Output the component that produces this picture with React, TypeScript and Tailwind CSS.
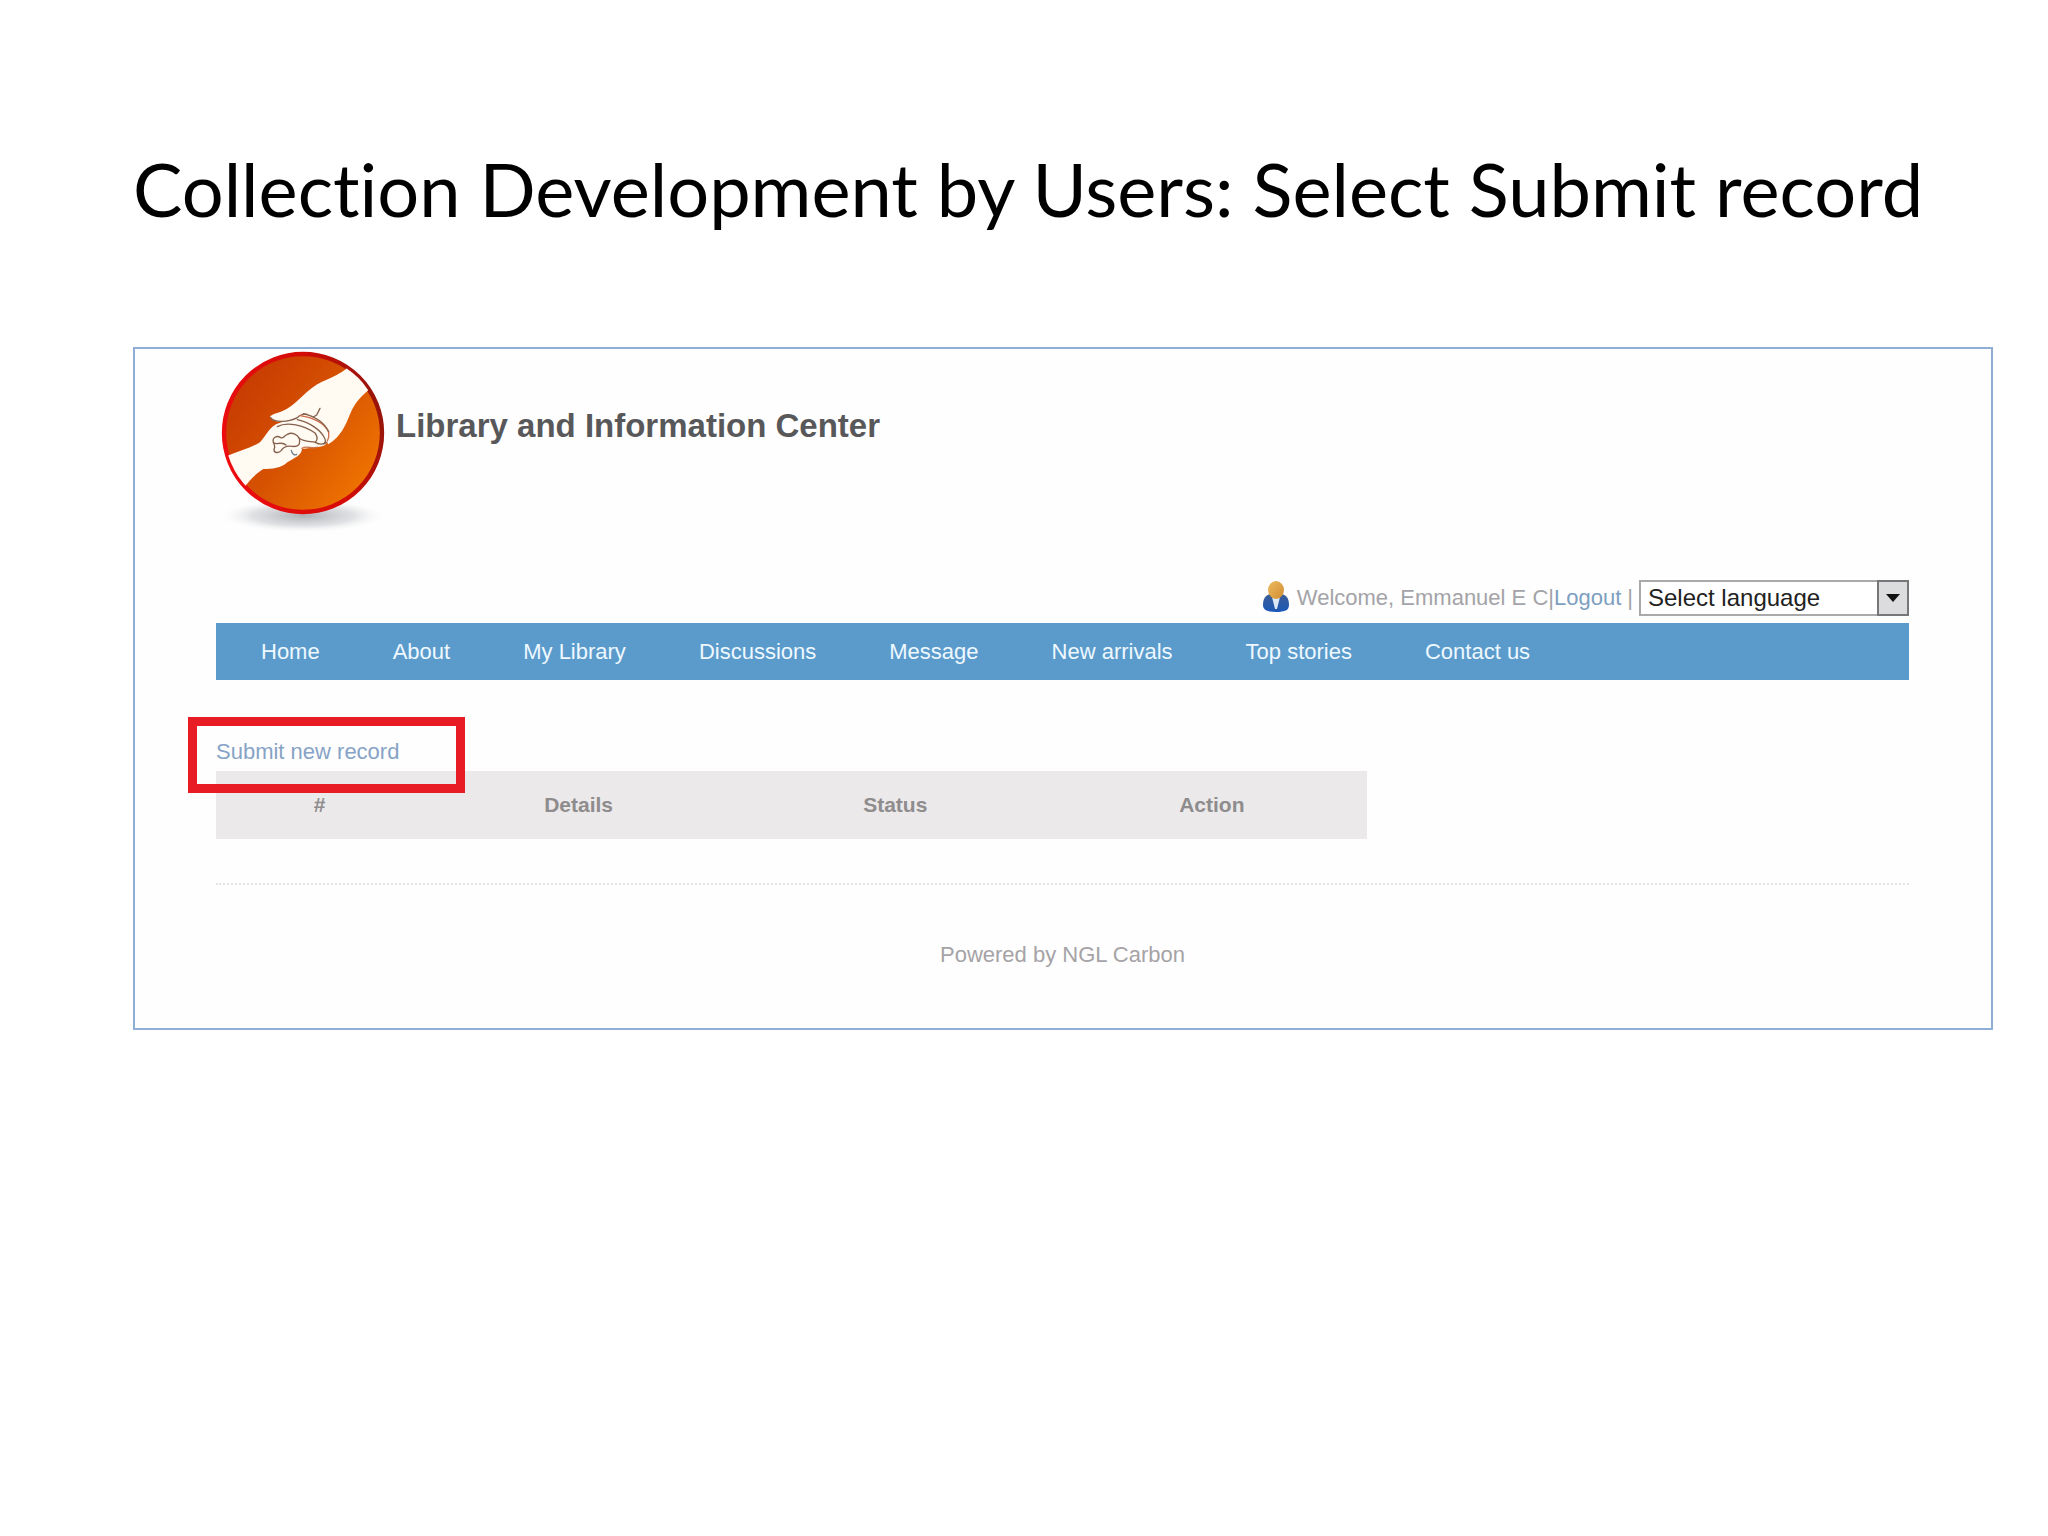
const NAV_LINKS = [
  "Home",
  "About",
  "My Library",
  "Discussions",
  "Message",
  "New arrivals",
  "Top stories",
  "Contact us",
];

const COLUMNS = [
  { label: "#", width: "w-[18%]" },
  { label: "Details", width: "w-[27%]" },
  { label: "Status", width: "w-[28%]" },
  { label: "Action", width: "w-[27%]" },
];

function Logo() {
  return (
    <svg viewBox="48 48 516 552" className="h-[184px] w-[172px] shrink-0" aria-hidden="true">
      <defs>
        <linearGradient id="disc" x1="0.1" y1="0.2" x2="0.9" y2="0.8">
          <stop offset="0" stopColor="#c83c02" />
          <stop offset="0.5" stopColor="#d65202" />
          <stop offset="1" stopColor="#ee7200" />
        </linearGradient>
        <linearGradient id="ring" x1="0" y1="0.7" x2="1" y2="0.4">
          <stop offset="0" stopColor="#ee0c10" />
          <stop offset="0.65" stopColor="#d40c08" />
          <stop offset="1" stopColor="#98140a" />
        </linearGradient>
        <radialGradient id="shadow">
          <stop offset="0" stopColor="#8a8f96" stopOpacity="0.7" />
          <stop offset="0.6" stopColor="#a9adb3" stopOpacity="0.35" />
          <stop offset="1" stopColor="#ffffff" stopOpacity="0" />
        </radialGradient>
        <clipPath id="inside">
          <circle cx="309" cy="294" r="234" />
        </clipPath>
      </defs>
      <ellipse cx="309" cy="542" rx="255" ry="52" fill="url(#shadow)" />
      <circle cx="309" cy="294" r="237" fill="url(#disc)" stroke="url(#ring)" strokeWidth="13" />
      <g clipPath="url(#inside)" fill="#fffaf2" strokeLinejoin="round" strokeLinecap="round">
        <path d="M450 92 C425 114 400 126 366 140 C323 160 298 198 260 222 C240 234 213 236 210 246 C214 258 240 264 262 262 C290 257 300 238 330 242 L385 328 C422 307 438 268 450 238 C463 206 478 186 524 150 Z" />
        <path d="M60 372 C110 350 150 340 180 322 C200 300 205 282 228 268 C255 256 280 255 296 240 C330 236 360 250 385 280 C392 300 388 322 372 332 C350 338 330 338 306 342 C304 362 284 368 262 382 C245 400 215 402 190 402 C165 418 150 435 130 460 Z" />
        <g fill="none" stroke="#85604c" strokeWidth="4">
          <path d="M212 248 C220 262 262 264 292 248 C300 240 310 236 322 238" />
          <path d="M232 275 C262 258 312 272 345 294 C354 306 352 316 346 322" />
          <path d="M292 254 C330 262 362 286 372 306 C378 316 378 322 372 326" />
          <path d="M300 242 C345 248 376 268 386 292 C388 302 386 310 382 318" stroke="#cf6a48" />
          <path d="M310 236 C344 244 370 258 386 290" />
          <path d="M360 220 L350 240 L340 246" />
          <path d="M298 310 C314 322 332 318 346 322 C356 328 368 330 380 322" />
          <path d="M298 310 C292 298 276 290 262 298 C252 302 250 312 242 308 C230 300 216 308 220 322 C222 330 228 332 222 344 C222 354 236 356 244 346 C250 336 262 332 276 334 C292 336 302 332 298 310" />
          <path d="M222 324 C232 330 246 318 258 330" />
          <path d="M306 340 C322 330 336 344 352 336" stroke="#c8744e" />
          <path d="M274 346 C276 358 284 362 290 358" stroke="#6d8090" />
        </g>
      </g>
    </svg>
  );
}

function UserIcon() {
  return (
    <svg viewBox="0 0 26 34" className="h-[34px] w-[26px] shrink-0" aria-hidden="true">
      <defs>
        <linearGradient id="head" x1="0" y1="0" x2="1" y2="1">
          <stop offset="0" stopColor="#eebb60" />
          <stop offset="1" stopColor="#d08c30" />
        </linearGradient>
        <linearGradient id="body" x1="0" y1="0" x2="0" y2="1">
          <stop offset="0" stopColor="#3c5c94" />
          <stop offset="1" stopColor="#1b58b8" />
        </linearGradient>
      </defs>
      <path d="M0 24 C0 17 3 13 9 13 L17 13 C23 13 26 17 26 24 C26 29 22 31 13 31 C4 31 0 29 0 24 Z" fill="url(#body)" />
      <path d="M9 16 L17 16 L14 28 L12 28 Z" fill="#dce8f7" />
      <ellipse cx="13" cy="9" rx="8" ry="9" fill="url(#head)" />
    </svg>
  );
}

function UserBar() {
  return (
    <div className="flex items-center justify-end text-[22px] leading-[36px] text-[#a3a3a8]">
      <UserIcon />
      <span className="ml-2">Welcome, Emmanuel E C|</span>
      <a href="#logout" className="text-[#7d9fc0]">
        Logout
      </a>
      <span className="mx-1.5">|</span>
      <div className="relative">
        <select
          aria-label="Select language"
          className="block h-9 w-[270px] appearance-none border-2 border-[#a9a9ab] bg-white pl-[7px] text-[24px] leading-[32px] text-[#222]"
        >
          <option>Select language</option>
        </select>
        <span className="pointer-events-none absolute inset-y-0 right-0 flex w-8 items-center justify-center border-2 border-[#77777a] bg-[#dcdcde]">
          <svg viewBox="0 0 14 8" className="h-2 w-3.5" aria-hidden="true">
            <path d="M0 0 H14 L7 8 Z" fill="#111" />
          </svg>
        </span>
      </div>
    </div>
  );
}

function NavBar() {
  return (
    <nav className="mt-[7px] flex h-[57px] items-center gap-[73px] bg-[#5b9bcb] pl-[45px] text-[22px] text-[#eef8ff]">
      {NAV_LINKS.map((label) => (
        <a key={label} href="#" className="whitespace-nowrap">
          {label}
        </a>
      ))}
    </nav>
  );
}

function Records() {
  return (
    <section className="pt-[54px]">
      <div className="mb-px flex h-9 items-center">
        <a href="#submit" className="relative text-[22px] leading-[34px] text-[#86a3c6]">
          Submit new record
          <span className="absolute -top-[18px] -left-[28px] h-[76px] w-[277px] border-[9px] border-[#e81c24]" />
        </a>
      </div>
      <table className="h-[68px] w-[68%] table-fixed bg-[#ebe9ea] text-[21px] text-[#8f8c8d]">
        <thead>
          <tr>
            {COLUMNS.map((col) => (
              <th key={col.label} scope="col" className={col.width}>
                {col.label}
              </th>
            ))}
          </tr>
        </thead>
      </table>
    </section>
  );
}

export default function App() {
  return (
    <main className="min-h-screen bg-white pt-[140px] pr-[55px] pb-16 pl-[133px] font-['Liberation_Sans',Arial,sans-serif]">
      <h1 className="font-['Lato',sans-serif] text-[74px] leading-[98px] whitespace-nowrap text-black [font-variant-ligatures:none]">
        Collection Development by Users: Select Submit record
      </h1>
      <div className="mt-[109px] border-2 border-[#8eaed6] bg-[#fefefe] pr-[82px] pl-[81px]">
        <header className="flex pt-0.5">
          <Logo />
          <p className="mt-[57px] ml-2 text-[33px] leading-[36px] font-bold text-[#58585a]">
            Library and Information Center
          </p>
        </header>
        <div className="mt-[45px]">
          <UserBar />
        </div>
        <NavBar />
        <Records />
        <footer className="mt-[44px] border-t-2 border-dotted border-[#e6e2e8] pt-[54px] pb-[57px] text-center text-[22px] leading-[32px] text-[#a5a3a6]">
          Powered by NGL Carbon
        </footer>
      </div>
    </main>
  );
}
